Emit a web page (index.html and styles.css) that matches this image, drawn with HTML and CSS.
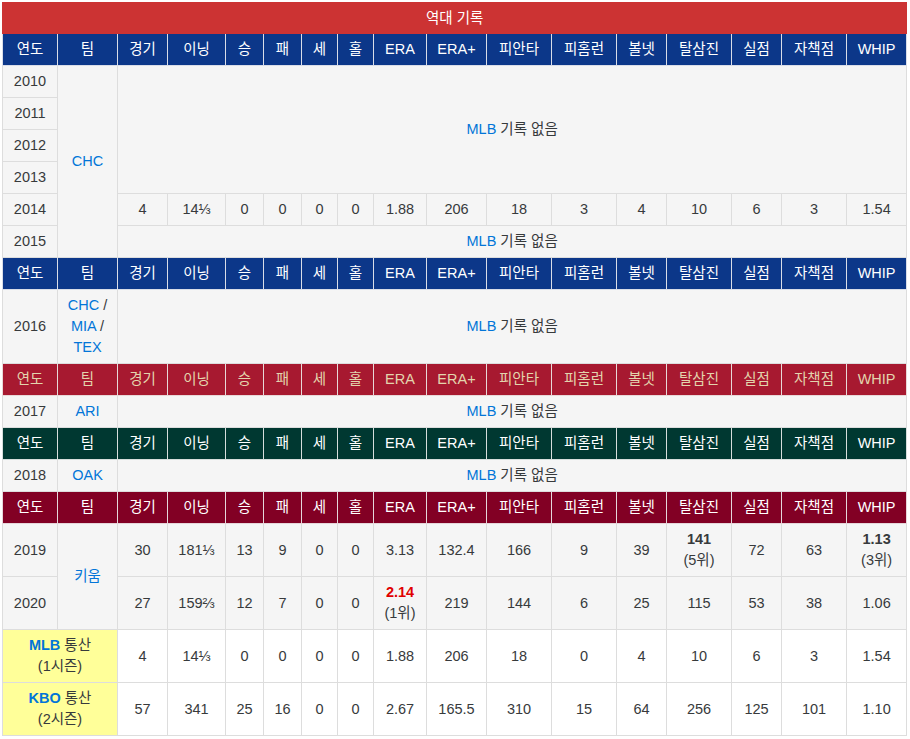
FILE: index.html
```html
<!DOCTYPE html>
<html lang="ko">
<head>
<meta charset="utf-8">
<link rel="stylesheet" href="styles.css">
</head>
<body>
<div class="wrap">
<table class="rec">
<colgroup>
<col style="width:55px"><col style="width:60px"><col style="width:50px"><col style="width:58px"><col style="width:38px"><col style="width:38px"><col style="width:36px"><col style="width:36px"><col style="width:53px"><col style="width:60px"><col style="width:65px"><col style="width:65px"><col style="width:50px"><col style="width:65px"><col style="width:50px"><col style="width:65px"><col style="width:60px">
</colgroup>
<tr class="title"><td colspan="17">역대 기록</td></tr>
<tr class="hd blue"><td>연도</td><td>팀</td><td>경기</td><td>이닝</td><td>승</td><td>패</td><td>세</td><td>홀</td><td>ERA</td><td>ERA+</td><td>피안타</td><td>피홈런</td><td>볼넷</td><td>탈삼진</td><td>실점</td><td>자책점</td><td>WHIP</td></tr>
<tr class="r"><td>2010</td><td rowspan="6"><a>CHC</a></td><td colspan="15" rowspan="4"><a>MLB</a> 기록 없음</td></tr>
<tr class="r"><td>2011</td></tr>
<tr class="r"><td>2012</td></tr>
<tr class="r"><td>2013</td></tr>
<tr class="r"><td>2014</td><td>4</td><td>14⅓</td><td>0</td><td>0</td><td>0</td><td>0</td><td>1.88</td><td>206</td><td>18</td><td>3</td><td>4</td><td>10</td><td>6</td><td>3</td><td>1.54</td></tr>
<tr class="r"><td>2015</td><td colspan="15"><a>MLB</a> 기록 없음</td></tr>
<tr class="hd blue"><td>연도</td><td>팀</td><td>경기</td><td>이닝</td><td>승</td><td>패</td><td>세</td><td>홀</td><td>ERA</td><td>ERA+</td><td>피안타</td><td>피홈런</td><td>볼넷</td><td>탈삼진</td><td>실점</td><td>자책점</td><td>WHIP</td></tr>
<tr class="r"><td>2016</td><td><a>CHC</a> /<br><a>MIA</a> /<br><a>TEX</a></td><td colspan="15"><a>MLB</a> 기록 없음</td></tr>
<tr class="hd ari"><td>연도</td><td>팀</td><td>경기</td><td>이닝</td><td>승</td><td>패</td><td>세</td><td>홀</td><td>ERA</td><td>ERA+</td><td>피안타</td><td>피홈런</td><td>볼넷</td><td>탈삼진</td><td>실점</td><td>자책점</td><td>WHIP</td></tr>
<tr class="r"><td>2017</td><td><a>ARI</a></td><td colspan="15"><a>MLB</a> 기록 없음</td></tr>
<tr class="hd oak"><td>연도</td><td>팀</td><td>경기</td><td>이닝</td><td>승</td><td>패</td><td>세</td><td>홀</td><td>ERA</td><td>ERA+</td><td>피안타</td><td>피홈런</td><td>볼넷</td><td>탈삼진</td><td>실점</td><td>자책점</td><td>WHIP</td></tr>
<tr class="r"><td>2018</td><td><a>OAK</a></td><td colspan="15"><a>MLB</a> 기록 없음</td></tr>
<tr class="hd kiw"><td>연도</td><td>팀</td><td>경기</td><td>이닝</td><td>승</td><td>패</td><td>세</td><td>홀</td><td>ERA</td><td>ERA+</td><td>피안타</td><td>피홈런</td><td>볼넷</td><td>탈삼진</td><td>실점</td><td>자책점</td><td>WHIP</td></tr>
<tr class="r two"><td>2019</td><td rowspan="2"><a>키움</a></td><td>30</td><td>181⅓</td><td>13</td><td>9</td><td>0</td><td>0</td><td>3.13</td><td>132.4</td><td>166</td><td>9</td><td>39</td><td><b>141</b><br>(5위)</td><td>72</td><td>63</td><td><b>1.13</b><br>(3위)</td></tr>
<tr class="r two"><td>2020</td><td>27</td><td>159⅔</td><td>12</td><td>7</td><td>0</td><td>0</td><td><b class="red">2.14</b><br>(1위)</td><td>219</td><td>144</td><td>6</td><td>25</td><td>115</td><td>53</td><td>38</td><td>1.06</td></tr>
<tr class="tot two"><td colspan="2" class="yel"><b><a>MLB</a></b> 통산<br>(1시즌)</td><td>4</td><td>14⅓</td><td>0</td><td>0</td><td>0</td><td>0</td><td>1.88</td><td>206</td><td>18</td><td>0</td><td>4</td><td>10</td><td>6</td><td>3</td><td>1.54</td></tr>
<tr class="tot two"><td colspan="2" class="yel"><b><a>KBO</a></b> 통산<br>(2시즌)</td><td>57</td><td>341</td><td>25</td><td>16</td><td>0</td><td>0</td><td>2.67</td><td>165.5</td><td>310</td><td>15</td><td>64</td><td>256</td><td>125</td><td>101</td><td>1.10</td></tr>
</table>
</div>
</body>
</html>
```
FILE: styles.css
```css
html, body { margin: 0; padding: 0; background: #fff; }
body { font-family: "Liberation Sans", Arial, "Noto Sans CJK KR", sans-serif; font-size: 14.5px; color: #373a3c; }
.wrap { padding: 2px 0 0 2px; }
.rec { border-collapse: collapse; table-layout: fixed; width: 904px; }
.rec td { border: 1px solid #dddddd; text-align: center; vertical-align: middle; padding: 5px 2px; line-height: 21px; height: 21px; }
.rec .title td { background: #cc3333; color: #fff; height: 19px; padding: 5px 2px 4px; border-color: #cc3333; }
.rec .hd td { height: 21px; }
.blue td { background: #0c3789; color: #fff; border-color: #d9dde8; }
.ari td { background: #a71930; color: #e3d4ad; border-color: #e8d8d8; }
.oak td { background: #003831; color: #fff; border-color: #d6dedc; }
.kiw td { background: #820024; color: #fff; border-color: #e6d6da; }
.r td { background: #f5f5f5; }
.tot td { background: #fff; }
.rec td.yel { background: #ffff99; }
.two td { height: 42px; }
a { color: #0275d8; text-decoration: none; }
b { font-weight: bold; }
.red { color: #e00000; }
```
